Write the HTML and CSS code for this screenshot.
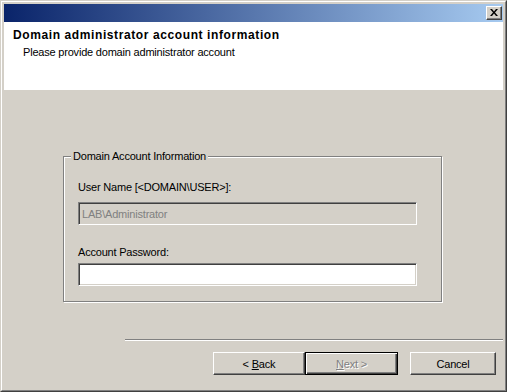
FILE: index.html
```html
<!DOCTYPE html>
<html lang="en">
<head>
    <meta charset="UTF-8">
    <title>Domain administrator account information</title>
    <link rel="stylesheet" href="styles.css">
</head>
<body>
    <div class="window">
        <div class="frame">
            <div class="titlebar">
                <button class="close-btn" title="Close">
                    <svg width="8" height="7" viewBox="0 0 8 7">
                        <path d="M0 0h2l2 2.5 2-2.5h2L5 3.5 8 7H6L4 4.5 2 7H0l3-3.5z" fill="#000"/>
                    </svg>
                </button>
            </div>

            <div class="header">
                <div class="header-title">Domain administrator account information</div>
                <div class="header-sub">Please provide domain administrator account</div>
            </div>

            <div class="content">
                <div class="group">
                    <span class="group-label">Domain Account Information</span>

                    <label class="field-label" for="userName">User Name [&lt;DOMAIN\USER&gt;]:</label>
                    <input type="text" id="userName" class="field" value="LAB\Administrator" disabled>

                    <label class="field-label field-label-2" for="password">Account Password:</label>
                    <input type="password" id="password" class="field field-pwd">
                </div>

                <div class="separator"></div>

                <div class="buttons">
                    <button class="btn"><span>&lt; <u>B</u>ack</span></button>
                    <button class="btn btn-default" disabled><span><u>N</u>ext &gt;</span></button>
                    <button class="btn btn-cancel"><span>Cancel</span></button>
                </div>
            </div>
        </div>
    </div>
</body>
</html>
```

FILE: styles.css
```css
* {
    margin: 0;
    padding: 0;
    box-sizing: border-box;
    font-family: 'Liberation Sans', Arial, sans-serif;
}

body {
    background-color: #d4d0c8;
    font-size: 11px;
    letter-spacing: -0.2px;
    color: #000;
}

.window {
    width: 507px;
    height: 392px;
    border: 1px solid;
    border-color: #d4d0c8 #404040 #404040 #d4d0c8;
}

.frame {
    height: 100%;
    border: 1px solid;
    border-color: #fff #808080 #808080 #fff;
    padding: 2px;
    background-color: #d4d0c8;
    display: flex;
    flex-direction: column;
}

.titlebar {
    height: 18px;
    background: linear-gradient(to right, #0a246a, #a6caf0);
    display: flex;
    justify-content: flex-end;
    align-items: center;
    padding-right: 1px;
}

.close-btn {
    width: 16px;
    height: 14px;
    background-color: #d4d0c8;
    border: 1px solid;
    border-color: #fff #404040 #404040 #fff;
    box-shadow: inset -1px -1px #808080;
    display: flex;
    justify-content: center;
    align-items: center;
    padding-bottom: 1px;
}

.close-btn svg {
    display: block;
}

.header {
    height: 68px;
    background-color: #fff;
    padding: 6px 0 0 9px;
}

.header-title {
    font-size: 12px;
    font-weight: bold;
    line-height: 15px;
    letter-spacing: 0.6px;
}

.header-sub {
    line-height: 13px;
    margin: 3px 0 0 10px;
}

.content {
    flex: 1;
}

.group {
    position: relative;
    width: 379px;
    height: 146px;
    margin: 66px 0 0 59px;
    border: 1px solid #808080;
    box-shadow: inset 1px 1px #fff, 1px 1px #fff;
    padding: 24px 0 0 14px;
}

.group-label {
    position: absolute;
    top: -7px;
    left: 7px;
    padding: 0 2px;
    line-height: 13px;
    background-color: #d4d0c8;
}

.field-label {
    display: block;
    line-height: 13px;
}

.field-label-2 {
    margin-top: 21px;
}

.field {
    display: block;
    width: 339px;
    height: 23px;
    margin-top: 8px;
    border: 1px solid;
    border-color: #808080 #fff #fff #808080;
    box-shadow: inset 1px 1px #404040, inset -1px -1px #d4d0c8;
    padding: 0 3px;
    font-size: 11px;
    letter-spacing: -0.2px;
    background-color: #fff;
    outline: none;
}

.field:disabled {
    background-color: #d4d0c8;
    color: #808080;
}

.field-pwd {
    margin-top: 4px;
}

.separator {
    width: 378px;
    margin: 37px 0 0 121px;
    border-top: 1px solid #808080;
    border-bottom: 1px solid #fff;
}

.buttons {
    display: flex;
    margin: 11px 0 0 209px;
}

.btn {
    width: 92px;
    height: 23px;
    background-color: #d4d0c8;
    border: 1px solid;
    border-color: #fff #404040 #404040 #fff;
    box-shadow: inset -1px -1px #808080;
    font-size: 11px;
    letter-spacing: -0.2px;
    color: #000;
}

.btn-default {
    width: 93px;
    border: 1px solid #000;
    box-shadow: inset 1px 1px #fff, inset -1px -1px #404040, inset -2px -2px #808080;
}

.btn:disabled {
    color: #808080;
    text-shadow: 1px 1px #fff;
}

.btn-cancel {
    width: 86px;
    margin-left: 12px;
}
```
